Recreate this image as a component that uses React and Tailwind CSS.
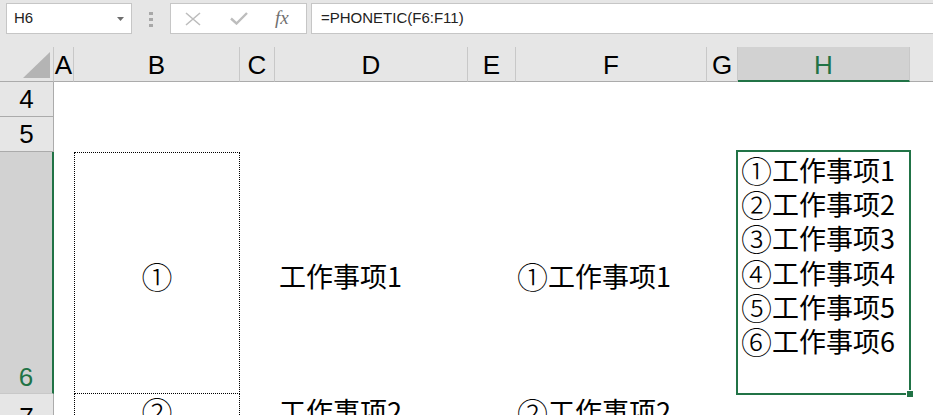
export default function App() {
  const colHdr =
    "flex items-center justify-center bg-[#e6e6e6] border-r border-b border-r-[#c8c8c8] border-b-[#ababab] text-[26px] text-black pt-[3px]";
  const rowHdr =
    "flex items-center justify-center bg-[#e6e6e6] border-r border-b border-[#ababab] text-[26px] text-black";
  const hdrFont = { fontFamily: '"Liberation Sans Narrow", "Liberation Sans", Arial, sans-serif' };
  const cjk = "text-[27px] text-black whitespace-nowrap";
  const circ = "text-[31px] leading-[34px] font-light";
  const list = [
    ["①", "工作事项1"],
    ["②", "工作事项2"],
    ["③", "工作事项3"],
    ["④", "工作事项4"],
    ["⑤", "工作事项5"],
    ["⑥", "工作事项6"],
  ];

  return (
    <div
      className="w-[933px] h-[415px] overflow-hidden bg-white"
      style={{ fontFamily: '"Noto Sans CJK SC", "Liberation Sans", sans-serif' }}
    >
      {/* Formula bar */}
      <div className="h-[47px] bg-[#e6e6e6] flex items-start pt-[3px] overflow-hidden">
        <div className="ml-[6px] w-[126px] h-[31px] shrink-0 bg-white border border-[#c6c6c6] flex items-center pl-[7px] pr-[7px]">
          <span
            className="flex-1 text-[15px] text-[#222]"
            style={{ fontFamily: '"Liberation Sans", Arial, sans-serif' }}
          >
            H6
          </span>
          <svg width="7" height="4" viewBox="0 0 7 4">
            <polygon points="0,0 7,0 3.5,4" fill="#6d6d6d" />
          </svg>
        </div>
        <div className="ml-[17px] mt-[9px] w-[4px] shrink-0 flex flex-col gap-[3px]">
          <div className="w-[4px] h-[3px] bg-[#a8a8a8]" />
          <div className="w-[4px] h-[3px] bg-[#a8a8a8]" />
          <div className="w-[4px] h-[3px] bg-[#a8a8a8]" />
        </div>
        <div className="ml-[17px] w-[137px] h-[31px] shrink-0 bg-white border border-[#c6c6c6] flex items-center">
          <svg className="ml-[14px]" width="16" height="14" viewBox="0 0 16 14">
            <path d="M1 1 L15 13 M15 1 L1 13" stroke="#bdbdbd" strokeWidth="1.6" fill="none" />
          </svg>
          <svg className="ml-[29px]" width="18" height="13" viewBox="0 0 18 13">
            <path d="M1 6.5 L6.5 11.5 L17 1" stroke="#bdbdbd" strokeWidth="2.4" fill="none" />
          </svg>
          <span
            className="ml-[27px] text-[19px] italic text-[#707070] leading-none -mt-[2px]"
            style={{ fontFamily: '"Liberation Serif", "Times New Roman", serif' }}
          >
            fx
          </span>
        </div>
        <div className="ml-[4px] w-[640px] h-[31px] shrink-0 bg-white border border-[#c6c6c6] flex items-center pl-[9px]">
          <span
            className="text-[15px] text-[#222]"
            style={{ fontFamily: '"Liberation Sans", Arial, sans-serif' }}
          >
            =PHONETIC(F6:F11)
          </span>
        </div>
      </div>

      {/* Sheet grid */}
      <div className="grid grid-cols-[54px_20px_166px_35px_193px_48px_191px_31px_172px_1fr] grid-rows-[35px_35px_35px_242px_35px]">
        {/* Header row */}
        <div className="flex items-end justify-end bg-[#e6e6e6] border-r border-b border-r-[#c8c8c8] border-b-[#ababab] pr-[3px] pb-[3px]">
          <svg width="27" height="26" viewBox="0 0 27 26">
            <polygon points="27,0 27,26 0,26" fill="#b4b4b4" />
          </svg>
        </div>
        <div className={colHdr} style={hdrFont}>A</div>
        <div className={colHdr} style={hdrFont}>B</div>
        <div className={colHdr} style={hdrFont}>C</div>
        <div className={colHdr} style={hdrFont}>D</div>
        <div className={colHdr} style={hdrFont}>E</div>
        <div className={colHdr} style={hdrFont}>F</div>
        <div className={colHdr} style={hdrFont}>G</div>
        <div
          className="flex items-center justify-center bg-[#d2d2d2] border-r border-b-2 border-r-[#c8c8c8] border-b-[#217346] text-[26px] text-[#217346] pt-[4px]"
          style={hdrFont}
        >
          H
        </div>
        <div className="bg-[#e6e6e6] border-b border-b-[#ababab]" />

        {/* Row 4 */}
        <div className={rowHdr} style={hdrFont}>4</div>
        <div className="col-span-9" />

        {/* Row 5 */}
        <div className={rowHdr} style={hdrFont}>5</div>
        <div className="col-span-9" />

        {/* Row 6 */}
        <div
          className="flex items-end justify-center bg-[#d2d2d2] border-r-2 border-b border-r-[#217346] border-b-[#c8c8c8] text-[26px] leading-none text-[#217346] pb-[3px]"
          style={hdrFont}
        >
          6
        </div>
        <div />
        <div className={`flex items-center justify-center border border-dotted border-black ${cjk} pt-[6px]`}>
          <span className={circ}>①</span>
        </div>
        <div />
        <div className={`flex items-center pl-[4px] ${cjk} pt-[6px]`}>工作事项1</div>
        <div />
        <div className={`flex items-center pl-[1px] ${cjk} pt-[6px]`}>
          <span className={circ}>①</span>工作事项1
        </div>
        <div />
        <div className={`relative pt-[1px] pl-[3px] ${cjk} leading-[34.2px]`}>
          {list.map(([c, t]) => (
            <div key={t} className="flex items-center h-[34.2px]">
              <span className={circ}>{c}</span>
              {t}
            </div>
          ))}
          <div className="absolute -left-[2px] -top-[2px] -right-[1px] -bottom-[1px] border-2 border-[#217346] pointer-events-none">
            <div className="absolute -right-[5px] -bottom-[5px] w-[8px] h-[8px] bg-[#217346] border border-white" />
          </div>
        </div>
        <div />

        {/* Row 7 */}
        <div className={`${rowHdr} items-start pt-[4px]`} style={hdrFont}>7</div>
        <div />
        <div className={`flex items-center justify-center border-x border-b border-dotted border-black ${cjk}`}>
          <span className={circ}>②</span>
        </div>
        <div />
        <div className={`flex items-center pl-[4px] ${cjk}`}>工作事项2</div>
        <div />
        <div className={`flex items-center pl-[1px] ${cjk}`}>
          <span className={circ}>②</span>工作事项2
        </div>
        <div />
        <div />
        <div />
      </div>
    </div>
  );
}
